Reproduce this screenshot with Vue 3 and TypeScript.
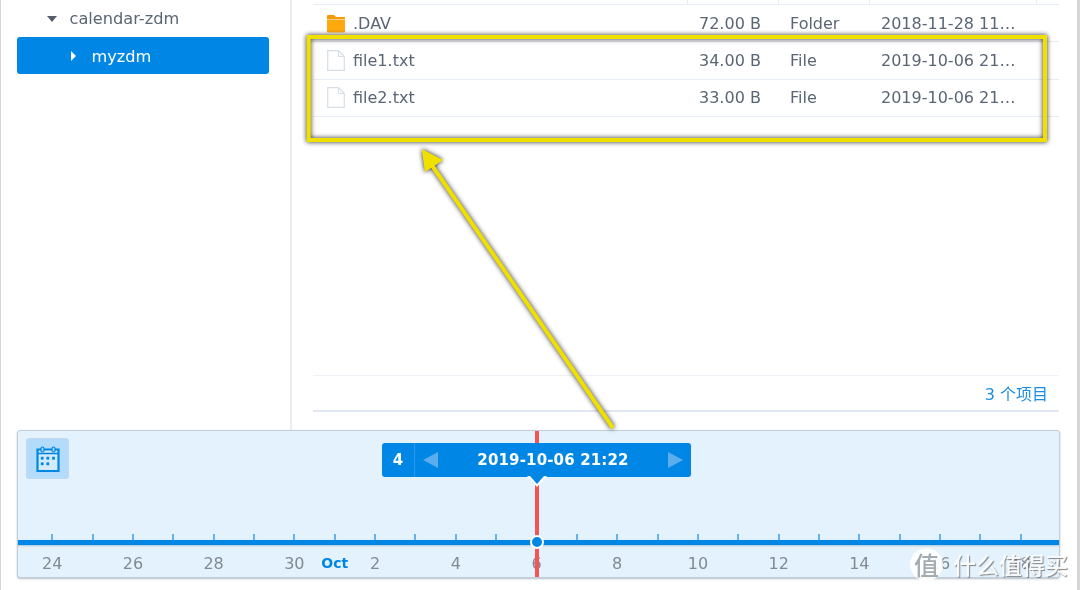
<script setup lang="ts">
interface FileRow {
  name: string
  size: string
  kind: string
  modified: string
  folder?: boolean
}

const files: FileRow[] = [
  { name: '.DAV', size: '72.00 B', kind: 'Folder', modified: '2018-11-28 11:45:10', folder: true },
  { name: 'file1.txt', size: '34.00 B', kind: 'File', modified: '2019-10-06 21:22:08' },
  { name: 'file2.txt', size: '33.00 B', kind: 'File', modified: '2019-10-06 21:22:08' },
]

const days = ['24', '', '26', '', '28', '', '30', 'Oct', '2', '', '4', '', '6', '', '8', '', '10', '', '12', '', '14', '', '16', '', '18']
</script>

<template>
  <div class="page">
    <div class="top">
      <aside class="tree">
        <div class="tree-row tree-row--parent">
          <span class="caret-down"></span>
          <span>calendar-zdm</span>
        </div>
        <div class="tree-row tree-row--active">
          <span class="caret-right"></span>
          <span>myzdm</span>
        </div>
      </aside>

      <main class="files">
        <div class="grid-head">
          <span class="col-name"></span>
          <span class="col-size"></span>
          <span class="col-kind"></span>
          <span class="col-date"></span>
          <span class="col-rest"></span>
        </div>
        <div v-for="file in files" :key="file.name" class="file-row">
          <div class="col-name name-cell">
            <svg v-if="file.folder" class="file-icon" width="18" height="21" viewBox="0 0 18 21">
              <path d="M0 5 V3 Q0 2 1 2 H7 L9 4 H17 Q18 4 18 5 V6 H0 Z" fill="#f79a00" />
              <path d="M0 6.5 H18 V18.5 Q18 19.5 17 19.5 H1 Q0 19.5 0 18.5 Z" fill="#ffa90f" />
            </svg>
            <svg v-else class="file-icon" width="18" height="21" viewBox="0 0 18 21">
              <path d="M.7.7 H11.5 L17.3 6.5 V20.3 H.7 Z" fill="#fff" stroke="#d6dee6" stroke-width="1.2" />
              <path d="M11.5.7 V6.5 H17.3" fill="none" stroke="#d6dee6" stroke-width="1" />
            </svg>
            <span>{{ file.name }}</span>
          </div>
          <div class="col-size cell">{{ file.size }}</div>
          <div class="col-kind cell">{{ file.kind }}</div>
          <div class="col-date cell date-cell">{{ file.modified }}</div>
          <div class="col-rest"></div>
        </div>
        <div class="files-spacer"></div>
        <footer class="files-foot">3 个项目</footer>
      </main>
    </div>

    <section class="timeline">
      <div class="timeline-top">
        <button class="cal-btn">
          <svg width="26" height="26" viewBox="0 -1 26 26">
            <path d="M2.5 2.5 H23.5 V24 H2.5 Z" fill="#d4ebfd" stroke="#0086e5" stroke-width="2.2" />
            <path d="M2.5 6.5 H23.5" fill="none" stroke="#0086e5" stroke-width="1.6" />
            <rect x="6" y="0" width="3" height="5" rx="1.5" fill="#b3dbfb" stroke="#0086e5" stroke-width="1.2" />
            <rect x="17" y="0" width="3" height="5" rx="1.5" fill="#b3dbfb" stroke="#0086e5" stroke-width="1.2" />
            <g fill="#0086e5">
              <rect x="5.8" y="9.8" width="2.8" height="2.8" />
              <rect x="11.4" y="9.8" width="2.8" height="2.8" />
              <rect x="17.1" y="9.8" width="2.8" height="2.8" />
              <rect x="5.8" y="15.4" width="2.8" height="2.8" />
              <rect x="11.4" y="15.4" width="2.8" height="2.8" />
            </g>
          </svg>
        </button>
      </div>

      <div class="ticks">
        <span v-for="(_, i) in days" :key="i" class="tick"></span>
      </div>
      <div class="axis"></div>
      <div class="labels">
        <span v-for="(day, i) in days" :key="i" class="label" :class="{ 'label--month': day === 'Oct' }">{{ day }}</span>
      </div>

      <div class="cursor"></div>
      <div class="cursor-dot"></div>

      <div class="picker">
        <span class="picker-count">4</span>
        <div class="picker-nav">
          <span class="picker-prev"></span>
          <span class="picker-date">2019-10-06 21:22</span>
          <span class="picker-next"></span>
        </div>
      </div>
    </section>

    <svg class="markup" width="1080" height="590" viewBox="0 0 1080 590">
      <rect x="308.7" y="37" width="736.3" height="103" fill="none" stroke="#f0e000" stroke-width="4" />
      <path d="M613 428 L431 164" fill="none" stroke="#f0e000" stroke-width="4" />
      <path d="M421.7 149 L443 160 L425 172 Z" fill="#f0e000" />
    </svg>

    <div class="watermark">
      <span class="watermark-badge">值</span>
      <span class="watermark-text">什么值得买</span>
    </div>
  </div>
</template>

<style scoped>
.page {
  position: relative;
  width: 1080px;
  height: 590px;
  overflow: hidden;
  background: #fff;
  font-family: "DejaVu Sans", sans-serif;
  color: #5a6675;
  filter: blur(0.35px);
}

/* edges of the windows behind the cropped one */
.page::before,
.page::after {
  content: "";
  position: absolute;
  top: 0;
  bottom: 0;
  background: #d6d6d6;
}

.page::before {
  left: 0;
  width: 1px;
}

.page::after {
  right: 0;
  width: 3px;
}

.top {
  display: flex;
  height: 430px;
}

.tree {
  flex-shrink: 0;
  box-sizing: border-box;
  padding-left: 17px;
  padding-right: 21px;
  border-right: 2px solid #ececec;
  width: 292px;
  font-size: 16.2px;
}

.tree-row {
  display: flex;
  align-items: center;
}

.tree-row--parent {
  height: 37px;
  padding-left: 30px;
  gap: 12.5px;
}

.tree-row--active {
  height: 37px;
  padding-top: 1px;
  box-sizing: border-box;
  padding-left: 54px;
  gap: 15.5px;
  border-radius: 3px;
  background: #0086e5;
  color: #fff;
}

.caret-down {
  width: 0;
  height: 0;
  border-left: 5.5px solid transparent;
  border-right: 5.5px solid transparent;
  border-top: 6px solid #555e6b;
}

.caret-right {
  width: 0;
  height: 0;
  border-top: 5px solid transparent;
  border-bottom: 5px solid transparent;
  border-left: 5.5px solid #fff;
}

.files {
  flex: 1;
  display: flex;
  flex-direction: column;
  margin-left: 21px;
  margin-right: 21px;
  font-size: 16px;
}

.grid-head {
  display: flex;
  height: 5px;
  border-bottom: 1px solid #e6edf4;
  box-sizing: border-box;
  flex-shrink: 0;
}

.grid-head span {
  border-right: 1px solid #e6edf4;
  box-sizing: border-box;
}

.grid-head .col-rest {
  border-right: 0;
}

.file-row {
  display: flex;
  align-items: center;
  height: 37.3px;
  flex-shrink: 0;
  box-sizing: border-box;
  border-bottom: 1px solid #e6edf4;
}

.col-name {
  width: 375px;
  flex-shrink: 0;
}

.col-size,
.col-kind {
  width: 91px;
  flex-shrink: 0;
}

.col-date {
  width: 167px;
  flex-shrink: 0;
}

.col-rest {
  flex: 1;
}

.name-cell {
  display: flex;
  align-items: center;
  gap: 8px;
  padding-left: 14px;
  box-sizing: border-box;
}

.file-icon {
  flex-shrink: 0;
}

.cell {
  box-sizing: border-box;
  padding-left: 11px;
  white-space: nowrap;
}

.date-cell {
  padding-right: 18px;
  overflow: hidden;
  text-overflow: ellipsis;
}

.files-spacer {
  flex: 1;
}

.files-foot {
  height: 37px;
  margin-bottom: 18px;
  box-sizing: border-box;
  border-top: 1px solid #eef2f6;
  border-bottom: 2px solid #e1e8f1;
  padding-right: 11px;
  display: flex;
  align-items: center;
  justify-content: flex-end;
  font-family: "DejaVu Sans", "Noto Sans CJK SC", sans-serif;
  color: #1a8fe3;
  font-size: 16px;
}

.timeline {
  position: relative;
  width: 1043px;
  height: 148px;
  margin-left: 17px;
  box-sizing: border-box;
  border: 1px solid #c4ced8;
  border-radius: 3px;
  background: #e3f2fd;
  box-shadow: 0 1px 2px rgba(90, 110, 130, 0.45);
}

.timeline-top {
  height: 103px;
  box-sizing: border-box;
  padding: 7px 0 0 8px;
}

.cal-btn {
  display: flex;
  align-items: center;
  justify-content: center;
  width: 43px;
  height: 41px;
  padding: 0;
  border: 1px solid #c3d8ea;
  border-radius: 3px;
  background: #b3dbfb;
}

.ticks,
.labels {
  display: flex;
  padding-left: 14px;
}

.ticks {
  height: 6px;
}

.tick {
  position: relative;
  width: 40.37px;
  flex-shrink: 0;
}

.tick::after {
  content: "";
  position: absolute;
  left: 19.2px;
  top: 0;
  width: 2px;
  height: 6px;
  background: #62b4f1;
}

.axis {
  height: 5px;
  background: #0086e5;
  box-shadow: 0 1px 2px rgba(90, 110, 130, 0.35);
}

.labels {
  height: 32px;
  align-items: center;
  padding-top: 4px;
  box-sizing: border-box;
}

.label {
  width: 40.37px;
  flex-shrink: 0;
  text-align: center;
  font-size: 16px;
  color: #828a92;
}

.label--month {
  font-size: 14px;
  font-weight: 700;
  color: #0086e5;
}

.cursor {
  position: absolute;
  left: 517px;
  top: 0;
  bottom: 0;
  width: 4px;
  background: #f55455;
}

.cursor-dot {
  position: absolute;
  left: 512px;
  top: 104px;
  width: 10px;
  height: 10px;
  box-sizing: content-box;
  border: 2.5px solid #fff;
  border-radius: 50%;
  background: #0086e5;
}

.picker {
  position: absolute;
  left: 364px;
  top: 12px;
  display: flex;
  width: 309px;
  height: 34px;
  border-radius: 3px;
  background: #0086e5;
  color: #fff;
  font-weight: 700;
  font-size: 15px;
}

.picker::before {
  content: "";
  position: absolute;
  left: 145px;
  top: 33px;
  width: 20px;
  height: 11px;
  background: #fff;
  clip-path: polygon(0 0, 100% 0, 50% 100%);
}

.picker::after {
  content: "";
  position: absolute;
  left: 148px;
  top: 33px;
  width: 14px;
  height: 8px;
  background: #0086e5;
  clip-path: polygon(0 0, 100% 0, 50% 100%);
}

.picker-count {
  width: 32px;
  display: flex;
  align-items: center;
  justify-content: center;
  border-right: 1px solid #2c9aea;
}

.picker-nav {
  flex: 1;
  display: flex;
  align-items: center;
  justify-content: space-between;
  padding: 0 8px;
}

.picker-prev,
.picker-next {
  width: 0;
  height: 0;
  border-top: 8px solid transparent;
  border-bottom: 8px solid transparent;
}

.picker-prev {
  border-right: 15px solid #5aaeee;
}

.picker-next {
  border-left: 15px solid #5aaeee;
}

.picker-date {
  letter-spacing: 0.15px;
}

.markup {
  position: absolute;
  left: 0;
  top: 0;
  pointer-events: none;
  filter: drop-shadow(0 0 2.5px rgba(20, 20, 20, 0.95));
}

.watermark {
  position: absolute;
  left: 910px;
  top: 547px;
  display: flex;
  align-items: center;
  gap: 10px;
  font-family: "Noto Sans CJK SC", sans-serif;
}

.watermark-badge {
  width: 33px;
  height: 33px;
  display: flex;
  align-items: center;
  justify-content: center;
  border-radius: 50%;
  background: rgba(255, 255, 255, 0.9);
  color: #a3abb1;
  font-size: 25px;
  font-weight: 500;
}

.watermark-text {
  font-size: 23px;
  font-weight: 500;
  white-space: nowrap;
  color: rgba(255, 255, 255, 0.92);
  text-shadow: 1px 1px 1px rgba(90, 90, 90, 0.7);
}
</style>
